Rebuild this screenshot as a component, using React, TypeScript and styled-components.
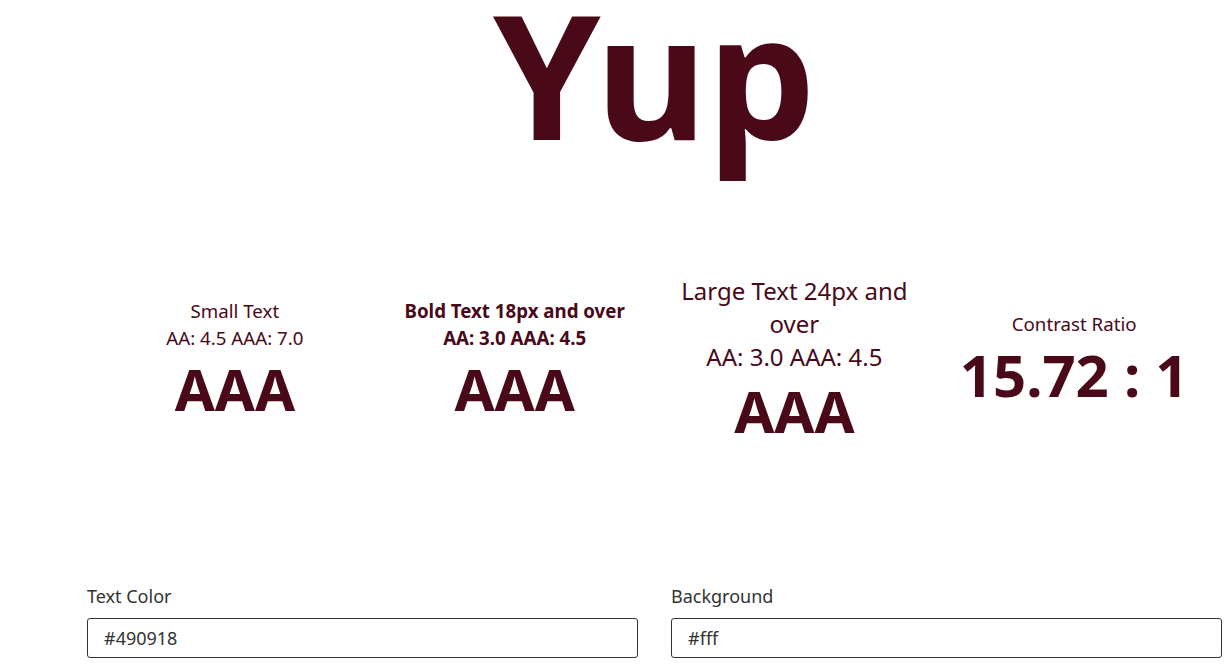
import styled, { createGlobalStyle } from "styled-components";

const fg = "#490918";

const GlobalStyle = createGlobalStyle`
    html, body {
        margin: 0;
        padding: 0;
        background: #fff;
        overflow-x: hidden;
    }
    body {
        font-family: "Noto Sans", "Open Sans", sans-serif;
        color: #333;
    }
`

const Page = styled.main`
    width: 1135px;
    margin-left: 87px;
    display: flex;
    flex-direction: column;
`

const Sample = styled.h1`
    margin: 0;
    text-align: center;
    font-size: 172px;
    line-height: 0.85;
    font-weight: 700;
    color: ${fg};
    padding-bottom: 89px;
`

const Results = styled.section`
    display: grid;
    grid-template-columns: repeat(4, 1fr);
    align-items: center;
    padding: 0 8px;
    min-height: 250px;
    color: ${fg};
`

const Result = styled.div`
    padding: 0 15px;
    text-align: center;
`

const Caption = styled.p<{ $size?: number; $bold?: boolean }>`
    margin: 0;
    font-size: ${({ $size }) => $size ?? 18.7}px;
    line-height: ${({ $size }) => ($size ? 1.375 : 1.45)};
    font-weight: ${({ $bold }) => ($bold ? 700 : 400)};
`

const Grade = styled.div`
    font-size: 58px;
    font-weight: 700;
    line-height: 1.2;
    margin-top: 3px;
`

const Ratio = styled(Grade)`
    letter-spacing: 0;
`

const Controls = styled.section`
    display: grid;
    grid-template-columns: 1fr 1fr;
    gap: 33px;
    margin-top: 99px;
`

const Field = styled.label`
    display: flex;
    flex-direction: column;
    gap: 10px;
    font-size: 18px;
    color: #333;
`

const Input = styled.input`
    box-sizing: border-box;
    height: 40px;
    padding: 0 16px;
    border: 1px solid #333;
    border-radius: 3px;
    font-family: inherit;
    font-size: 18px;
    color: #333;
    background: #fff;
`

const App = () => {
    return <>
        <GlobalStyle />
        <Page>
            <Sample>Yup</Sample>
            <Results>
                <Result>
                    <Caption>Small Text</Caption>
                    <Caption>AA: 4.5 AAA: 7.0</Caption>
                    <Grade>AAA</Grade>
                </Result>
                <Result>
                    <Caption $bold>Bold Text 18px and over</Caption>
                    <Caption $bold>AA: 3.0 AAA: 4.5</Caption>
                    <Grade>AAA</Grade>
                </Result>
                <Result>
                    <Caption $size={24}>Large Text 24px and over</Caption>
                    <Caption $size={24}>AA: 3.0 AAA: 4.5</Caption>
                    <Grade>AAA</Grade>
                </Result>
                <Result>
                    <Caption>Contrast Ratio</Caption>
                    <Ratio>15.72 : 1</Ratio>
                </Result>
            </Results>
            <Controls>
                <Field>
                    Text Color
                    <Input defaultValue="#490918" />
                </Field>
                <Field>
                    Background
                    <Input defaultValue="#fff" />
                </Field>
            </Controls>
        </Page>
    </>
}

export default App;
